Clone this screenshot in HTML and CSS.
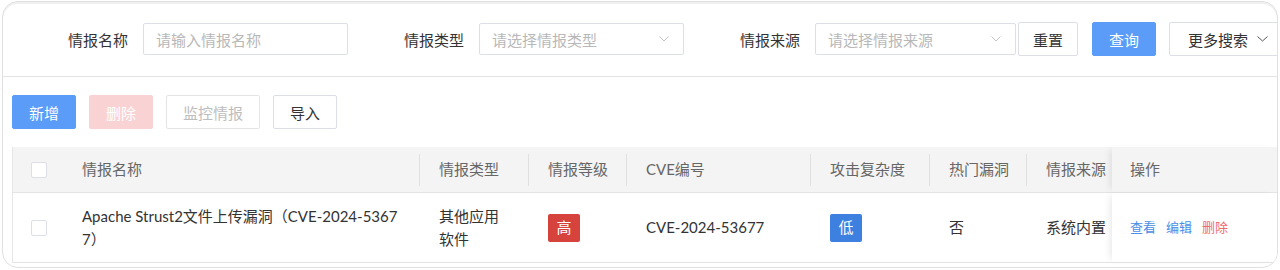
FILE: index.html
```html
<!DOCTYPE html>
<html lang="zh-CN">
<head>
<meta charset="utf-8">
<title>情报管理</title>
<link rel="stylesheet" href="styles.css">
</head>
<body>
<div class="frame">
  <div class="filters">
    <div class="item">
      <label class="lbl">情报名称</label>
      <div class="ctl input"><span class="ph">请输入情报名称</span></div>
    </div>
    <div class="item">
      <label class="lbl">情报类型</label>
      <div class="ctl select"><span class="ph">请选择情报类型</span>
        <svg class="chev" width="10" height="6" viewBox="0 0 10 6"><path d="M0.5 0.5 L5 5 L9.5 0.5" fill="none" stroke="#c0c4cc" stroke-width="1"/></svg>
      </div>
    </div>
    <div class="item">
      <label class="lbl">情报来源</label>
      <div class="ctl select src"><span class="ph">请选择情报来源</span>
        <svg class="chev" width="10" height="6" viewBox="0 0 10 6"><path d="M0.5 0.5 L5 5 L9.5 0.5" fill="none" stroke="#c0c4cc" stroke-width="1"/></svg>
      </div>
    </div>
    <button class="btn reset">重置</button>
    <button class="btn primary query">查询</button>
    <button class="btn more">更多搜索
      <svg class="chev2" width="11" height="6" viewBox="0 0 11 6"><path d="M0.5 0.5 L5.5 5 L10.5 0.5" fill="none" stroke="#555" stroke-width="1"/></svg>
    </button>
  </div>

  <div class="toolbar">
    <button class="btn primary">新增</button>
    <button class="btn danger-disabled">删除</button>
    <button class="btn disabled">监控情报</button>
    <button class="btn">导入</button>
  </div>

  <div class="table">
    <div class="row head">
      <div class="cell chk"><span class="box"></span></div>
      <div class="cell">情报名称</div>
      <div class="cell sep">情报类型</div>
      <div class="cell sep">情报等级</div>
      <div class="cell sep">CVE编号</div>
      <div class="cell sep">攻击复杂度</div>
      <div class="cell sep">热门漏洞</div>
      <div class="cell sep">情报来源</div>
      <div class="cell fixed">操作</div>
    </div>
    <div class="row body">
      <div class="cell chk"><span class="box"></span></div>
      <div class="cell name">Apache Strust2文件上传漏洞（CVE-2024-53677）</div>
      <div class="cell">其他应用软件</div>
      <div class="cell"><span class="tag high">高</span></div>
      <div class="cell">CVE-2024-53677</div>
      <div class="cell"><span class="tag low">低</span></div>
      <div class="cell">否</div>
      <div class="cell nowrap">系统内置</div>
      <div class="cell fixed ops">
        <a class="op">查看</a>
        <a class="op">编辑</a>
        <a class="op del">删除</a>
      </div>
    </div>
  </div>
</div>
</body>
</html>
```

FILE: styles.css
```css
* { box-sizing: border-box; }
html, body { margin: 0; padding: 0; background: #fff; }
body {
  font-family: "Lato", "Noto Sans CJK SC", "Noto Sans", sans-serif;
  font-size: 15px;
  color: #333;
  width: 1280px;
  height: 270px;
  overflow: hidden;
}
.frame {
  margin: 1px 2px 0 2px;
  height: 267px;
  border: 1px solid #e0e0e0;
  border-radius: 16px;
  overflow: hidden;
  background: #fff;
  box-shadow: inset 0 2px 0 #f0f0f0;
}

/* filters */
.filters {
  height: 75px;
  border-bottom: 1px solid #e3e3e3;
  display: flex;
  align-items: center;
  padding-left: 25px;
  white-space: nowrap;
}
.filters > * { flex: none; }
.item { display: flex; align-items: center; }
.item + .item { margin-left: 16px; }
.lbl {
  flex: none;
  width: 115px;
  text-align: right;
  padding-right: 15px;
  color: #333;
}
.ctl {
  flex: none;
  width: 205px;
  height: 32px;
  border: 1px solid #dcdfe6;
  border-radius: 2px;
  display: flex;
  align-items: center;
  padding-left: 12px;
  padding-right: 14px;
}
.ctl.src { width: 201px; }
.ph { color: #b8b8b8; flex: 1; }
.chev { flex: none; }

.btn {
  font-family: inherit;
  font-size: 15px;
  height: 34px;
  padding: 0 16px;
  border: 1px solid #dcdfe6;
  border-radius: 2px;
  background: #fff;
  color: #333;
  display: inline-flex;
  align-items: center;
  white-space: nowrap;
}
.btn.primary { background: #5a9cf8; border-color: #5a9cf8; color: #fff; }
.btn.danger-disabled { background: #f9d3d3; border-color: #f9d3d3; color: #fff; }
.btn.disabled { color: #bdbdbd; border-color: #e4e4e4; }
.filters .reset { margin-left: 2px; padding: 0 14px; }
.filters .query { margin-left: 14px; padding: 0 16px; }
.filters .more { margin-left: 13px; padding: 0 14px 0 18px; }
.chev2 { margin-left: 9px; }

/* toolbar */
.toolbar {
  display: flex;
  gap: 13px;
  padding: 18px 0 0 9px;
}

/* table */
.table {
  margin: 18px 0 0 9px;
  border-left: 1px solid #e6e6e6;
}
.row {
  display: grid;
  grid-template-columns: 49px 357px 109px 98px 184px 119px 97px 86px 1fr;
}
.row.head {
  height: 46px;
  background: #f4f4f4;
  border-bottom: 1px solid #e4e4e4;
  color: #666;
  white-space: nowrap;
}
.row.body {
  height: 70px;
  border-bottom: 1px solid #e4e4e4;
}
.cell {
  display: flex;
  align-items: center;
  padding: 0 20px;
  line-height: 23px;
  overflow: hidden;
}
.cell.nowrap { white-space: nowrap; }
.head .cell { padding-right: 0; }
.head .cell.sep {
  background: linear-gradient(#e0e0e0, #e0e0e0) left center / 1px 32px no-repeat;
}
.cell.chk { padding: 0 0 0 18px; }
.box {
  width: 16px;
  height: 16px;
  border: 1px solid #dcdfe6;
  border-radius: 2px;
  background: #fff;
}
.cell.name { word-break: break-all; padding-right: 18px; }
.body .cell.nowrap { padding-right: 0; }
.cell.fixed {
  background: #fff;
  box-shadow: -5px 0 7px -3px rgba(0, 0, 0, 0.09);
  padding-left: 18px;
}
.head .cell.fixed { background: #f4f4f4; }
.tag {
  display: inline-flex;
  align-items: center;
  justify-content: center;
  width: 32px;
  height: 28px;
  border-radius: 2px;
  color: #fff;
  font-size: 15px;
}
.tag.high { background: #d6423c; }
.tag.low { background: #3d80df; }
.ops { padding-left: 21px; gap: 10px; }
.op { font-size: 13px; color: #4a8ee6; }
.op.del { color: #f06b6b; }
```
